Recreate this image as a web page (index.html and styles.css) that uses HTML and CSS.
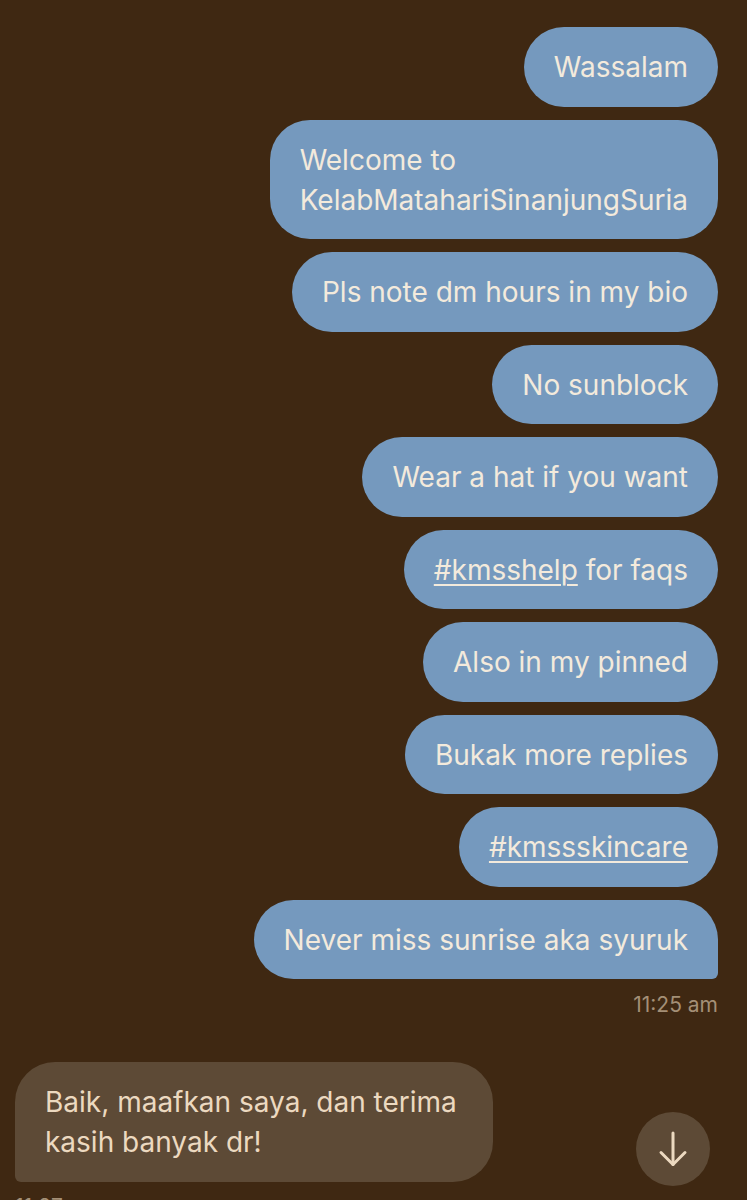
FILE: index.html
```html
<!DOCTYPE html>
<html>
<head>
<meta charset="utf-8">
<link rel="stylesheet" href="styles.css">
</head>
<body>
<div class="chat">
  <div class="row out"><div class="bubble">Wassalam</div></div>
  <div class="row out"><div class="bubble">Welcome to<br>KelabMatahariSinanjungSuria</div></div>
  <div class="row out"><div class="bubble">Pls note dm hours in my bio</div></div>
  <div class="row out"><div class="bubble">No sunblock</div></div>
  <div class="row out"><div class="bubble">Wear a hat if you want</div></div>
  <div class="row out"><div class="bubble"><span class="tag">#kmsshelp</span> for faqs</div></div>
  <div class="row out"><div class="bubble">Also in my pinned</div></div>
  <div class="row out"><div class="bubble">Bukak more replies</div></div>
  <div class="row out"><div class="bubble"><span class="tag">#kmssskincare</span></div></div>
  <div class="row out"><div class="bubble last">Never miss sunrise aka syuruk</div></div>
  <div class="time out-time">11:25 am</div>
  <div class="row in"><div class="bubble incoming">Baik, maafkan saya, dan terima kasih banyak dr!</div></div>
  <div class="time in-time">11:27 am</div>
</div>
<button class="scroll-down" aria-label="Scroll down">
  <svg width="30" height="36" viewBox="0 0 30 36" fill="none" stroke="#ecd9c0" stroke-width="3" stroke-linecap="round" stroke-linejoin="round">
    <path d="M15 2 V33.5"/>
    <path d="M3 21.5 L15 33.5 L27 21.5"/>
  </svg>
</button>
</body>
</html>
```
FILE: styles.css
```css
html, body {
  margin: 0;
  padding: 0;
  background: #3f2812;
  height: 1200px;
  overflow: hidden;
}
body {
  font-family: "Inter", "Liberation Sans", sans-serif;
  position: relative;
}
.chat {
  display: flex;
  flex-direction: column;
  gap: 13px;
  padding: 27px 29px 0 15px;
}
.row {
  display: flex;
}
.row.out { justify-content: flex-end; }
.row.in { justify-content: flex-start; }
.bubble {
  background: #7599be;
  color: #f3eadc;
  font-size: 28px;
  line-height: 40px;
  padding: 20px 30px 19.5px;
  border-radius: 40px;
  max-width: 418px;
}
.bubble.last {
  border-bottom-right-radius: 6px;
}
.tag {
  text-decoration: underline;
  text-underline-offset: 4px;
  text-decoration-thickness: 2px;
}
.time {
  font-size: 21px;
  color: #a48f76;
  line-height: 26px;
}
.out-time {
  text-align: right;
  margin-top: 0;
  margin-bottom: 31px;
}
.bubble.incoming {
  background: #5d4a36;
  color: #ecd9c0;
  width: 418px;
  border-bottom-left-radius: 6px;
}
.in-time {
  margin-top: -1px;
}
.scroll-down {
  position: absolute;
  left: 636px;
  top: 1112px;
  width: 74px;
  height: 74px;
  border-radius: 50%;
  border: none;
  background: #5d4a36;
  display: flex;
  align-items: center;
  justify-content: center;
  padding: 0;
}
```
